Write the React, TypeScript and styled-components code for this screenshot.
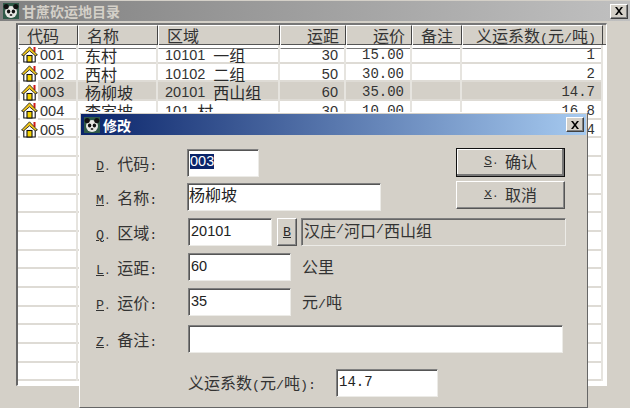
import React from "react";
import styled, { createGlobalStyle } from "styled-components";

const Global = createGlobalStyle`
  html, body { margin: 0; padding: 0; background: #d4d0c8; }
  * { box-sizing: border-box; }
`;
const han = `"Noto Sans CJK SC", sans-serif`;
const mono = `"Liberation Mono", monospace`;
const sans = `"Liberation Sans", sans-serif`;

const Screen = styled.div`
  position: relative; width: 630px; height: 408px; overflow: hidden;
  background: #d4d0c8; font-family: ${han}; color: #2a2a2a;
  padding: 1px 0 0 0; display: flex; flex-direction: column;
`;
const TitleBar = styled.div<{ $active?: boolean }>`
  height: ${p => (p.$active ? 21 : 20)}px; flex: none; display: flex; align-items: center; padding: 0 2px 0 3px;
  background: ${p => p.$active ? "linear-gradient(90deg,#0a246a,#a6caf0)" : "linear-gradient(90deg,#808080,#c0c0c0)"};
`;
const TitleText = styled.span<{ $active?: boolean }>`
  font-size: 14px; font-weight: 700; margin-left: 3px; flex: 1; line-height: 20px; white-space: nowrap;
  color: ${p => (p.$active ? "#fff" : "#d4d0c8")};
`;
const CloseBtn = styled.div`
  width: 18px; height: 15px; background: #d4d0c8; display: flex; align-items: center; justify-content: center;
  border: 1px solid; border-color: #fff #404040 #404040 #fff; box-shadow: inset -1px -1px 0 #808080;
`;
const Table = styled.div`
  margin: 2px 23px 0 16px; height: 363px; overflow: hidden; background: #fff;
  border-left: 2px solid #666; border-top: 2px solid #777; border-right: 1px solid #fff; border-bottom: 1px solid #fff;
  padding-right: 4px;
`;
const cols = "60px 80px 122px 66px 66px 50px 141px";
const HeadRow = styled.div`
  display: grid; grid-template-columns: ${cols}; height: 20px; background: #d4d0c8; margin-right: -4px; border-bottom: 1px solid #555;
`;
const HeadCell = styled.div<{ $right?: boolean }>`
  font-size: 16px; line-height: 19px; padding: 0 ${p => (p.$right ? 6 : 8)}px 0 8px; white-space: nowrap;
  text-align: ${p => (p.$right ? "right" : "left")};
  border: 1px solid; border-color: #fff #444 #777 #fff; color: #333;
`;
const Row = styled.div<{ $selected?: boolean }>`
  display: grid; grid-template-columns: ${cols}; height: 18.7px;
  background: ${p => (p.$selected ? "#d4d0c8" : "#fff")};
  box-shadow: inset 0 -2px 0 #dedbd5;
`;
const Cell = styled.div<{ $right?: boolean; $pad?: number }>`
  height: 18.7px; display: flex; align-items: center; white-space: nowrap;
  justify-content: ${p => (p.$right ? "flex-end" : "flex-start")};
  padding: 1px ${p => (p.$right ? 6 : 0)}px 0 ${p => p.$pad ?? 0}px;
  border-right: 2px solid #e6e4df; font-size: 16px; line-height: 18px;
`;
const IconBox = styled.span`
  width: 18px; height: 18px; margin: 0 2px 0 2px; background: #fff; display: flex; align-items: center; justify-content: center; flex: none;
`;
const Sans = styled.span`font-family: ${sans}; font-size: 14.5px; color: #333;`;
const Mono = styled.span`font-family: ${mono}; font-size: 14px; color: #333;`;
const Half = styled.span`font-family: ${mono}; font-size: 13.33px;`;
const Dot = styled.span`font-family: ${mono}; font-size: 11px; white-space: pre;`;
const Han = styled.span`margin-left: 8px;`;

const Dialog = styled.div`
  position: absolute; left: 79px; top: 112px; width: 509px; height: 296px; background: #d4d0c8; padding: 1px;
  border: 1px solid; border-color: #fff #666 #666 #fff;
`;
const Body = styled.div`padding: 14px 21px 0 15px; display: flex; flex-direction: column;`;
const Top = styled.div`display: flex; justify-content: space-between; align-items: flex-start;`;
const Fields = styled.div`display: flex; flex-direction: column; gap: 6px;`;
const Buttons = styled.div`display: flex; flex-direction: column; gap: 4px; margin-top: -1px;`;
const Btn = styled.div<{ $def?: boolean }>`
  width: 109px; height: ${p => (p.$def ? 29 : 28)}px; display: flex; align-items: center; justify-content: center; font-size: 16px; color: #333; padding-bottom: 3px;
  border: 1px solid; border-color: ${p => (p.$def ? "#111" : "#fff #555 #555 #fff")};
  box-shadow: ${p => (p.$def ? "inset -2px -2px 0 #777, inset 1px 1px 0 #fff" : "inset -1px -1px 0 #888")};
`;
const Key = styled.span`font-family: ${mono}; font-size: 13.33px; text-decoration: underline;`;
const FormRow = styled.div<{ $mt?: number; $ml?: number }>`
  display: flex; align-items: center; height: 28px; margin-top: ${p => p.$mt ?? 0}px; margin-left: ${p => p.$ml ?? 0}px;
`;
const Label = styled.label<{ $w: number; $up?: number }>`
  width: ${p => p.$w}px; flex: none; font-size: 16px; white-space: nowrap; color: #333; margin-top: ${p => -(p.$up ?? 1)}px;
`;
const Input = styled.div<{ $w: number; $mono?: boolean }>`
  width: ${p => p.$w}px; height: 28px; flex: none; background: #fff; display: flex; align-items: center; padding: 0 0 2px 2px; white-space: nowrap; overflow: hidden;
  border: 1px solid; border-color: #808080 #ecebe7 #ecebe7 #808080; box-shadow: inset 1px 1px 0 #555;
  font-family: ${p => (p.$mono ? mono : sans)}; font-size: ${p => (p.$mono ? 14 : 14.5)}px; color: #222;
`;
const HanValue = styled.span`font-family: ${han}; font-size: 16px; line-height: 18px; margin: -5px 0 0 -1px;`;
const Selected = styled.span`background: #0a246a; color: #fff; line-height: 15px; margin-top: -2px;`;
const Browse = styled.div`
  width: 20px; height: 28px; margin: 0 4px 0 5px; flex: none; display: flex; align-items: center; justify-content: center;
  border: 1px solid; border-color: #fff #555 #555 #fff; box-shadow: inset -1px -1px 0 #888;
`;
const ReadOnly = styled.div`
  width: 265px; height: 28px; flex: none; padding: 0 0 5px 2px; display: flex; align-items: center; font-size: 16px; color: #333; white-space: nowrap;
  border: 1px solid; border-color: #808080 #ecebe7 #ecebe7 #808080; box-shadow: inset 1px 1px 0 #666;
`;
const Unit = styled.span`font-size: 16px; margin-left: 11px; color: #333; margin-top: -3px;`;

const Panda = () => (
  <svg width="16" height="16" viewBox="0 0 16 16">
    <rect width="16" height="16" fill="#2f5a48" />
    <circle cx="8" cy="9" r="6" fill="#e8e8e4" />
    <circle cx="3.2" cy="3.6" r="2.6" fill="#111" />
    <circle cx="12.8" cy="3.6" r="2.6" fill="#111" />
    <ellipse cx="5.6" cy="8.4" rx="1.7" ry="2" fill="#111" />
    <ellipse cx="10.4" cy="8.4" rx="1.7" ry="2" fill="#111" />
    <ellipse cx="8" cy="12" rx="1.4" ry="1" fill="#333" />
  </svg>
);
const House = () => (
  <svg width="17" height="17" viewBox="0 0 17 17">
    <rect x="12.5" y="1" width="2" height="5" fill="#d01818" />
    <path d="M2.8 8.5V16H14.2V8.5" fill="#fff" stroke="#111" strokeWidth="1.1" />
    <path d="M8.5 .8L.6 9L2.6 9.8L8.5 4.8L14.4 9.8L16.4 9Z" fill="#f4c81c" stroke="#222" strokeWidth=".9" strokeLinejoin="round" />
    <rect x="6" y="9.5" width="5" height="6.5" fill="#f7d400" stroke="#111" strokeWidth="1.1" />
  </svg>
);
const X = () => (
  <svg width="10" height="8" viewBox="0 0 10 8"><path d="M1 0H3L5 2.8 7 0H9L6 4 9 8H7L5 5.2 3 8H1L4 4Z" fill="#000" /></svg>
);

const data = [
  { code: "001", name: "东村", num: "10101", reg: "一组", dist: "30", price: "15.00", k: "1" },
  { code: "002", name: "西村", num: "10102", reg: "二组", dist: "50", price: "30.00", k: "2" },
  { code: "003", name: "杨柳坡", num: "20101", reg: "西山组", dist: "60", price: "35.00", k: "14.7", sel: true },
  { code: "004", name: "李家坡", num: "101", reg: "村", dist: "30", price: "10.00", k: "16.8" },
  { code: "005", name: "", num: "", reg: "", dist: "", price: "", k: "15.4" },
];
const blanks = Array.from({ length: 13 }, (_, i) => i);

export default function App() {
  return (
    <Screen>
      <Global />
      <TitleBar>
        <Panda />
        <TitleText>甘蔗砍运地目录</TitleText>
        <CloseBtn><X /></CloseBtn>
      </TitleBar>
      <Table>
        <HeadRow>
          <HeadCell>代码</HeadCell>
          <HeadCell>名称</HeadCell>
          <HeadCell>区域</HeadCell>
          <HeadCell $right>运距</HeadCell>
          <HeadCell $right>运价</HeadCell>
          <HeadCell>备注</HeadCell>
          <HeadCell $right>义运系数<Half>(</Half>元<Half>/</Half>吨<Half>)</Half></HeadCell>
        </HeadRow>
        {data.map(r => (
          <Row key={r.code} $selected={r.sel}>
            <Cell><IconBox><House /></IconBox><Sans>{r.code}</Sans></Cell>
            <Cell $pad={7}>{r.name}</Cell>
            <Cell $pad={7}><Sans>{r.num}</Sans>{r.reg && <Han>{r.reg}</Han>}</Cell>
            <Cell $right><Sans>{r.dist}</Sans></Cell>
            <Cell $right><Mono>{r.price}</Mono></Cell>
            <Cell />
            <Cell $right><Mono>{r.k}</Mono></Cell>
          </Row>
        ))}
        {blanks.map(i => (
          <Row key={i}>
            <Cell /><Cell /><Cell /><Cell /><Cell /><Cell /><Cell />
          </Row>
        ))}
      </Table>
      <Dialog>
        <TitleBar $active>
          <Panda />
          <TitleText $active>修改</TitleText>
          <CloseBtn><X /></CloseBtn>
        </TitleBar>
        <Body>
          <Top>
            <Fields>
              <FormRow>
                <Label $w={91}><Key>D</Key><Dot>. </Dot>代码<Half>:</Half></Label>
                <Input $w={72}><Selected>003</Selected></Input>
              </FormRow>
              <FormRow>
                <Label $w={91}><Key>M</Key><Dot>. </Dot>名称<Half>:</Half></Label>
                <Input $w={194}><HanValue>杨柳坡</HanValue></Input>
              </FormRow>
            </Fields>
            <Buttons>
              <Btn $def><Key>S</Key><Dot>. </Dot>确认</Btn>
              <Btn><Key>x</Key><Dot>. </Dot>取消</Btn>
            </Buttons>
          </Top>
          <FormRow $mt={7}>
            <Label $w={92}><Key>Q</Key><Dot>. </Dot>区域<Half>:</Half></Label>
            <Input $w={84}>20101</Input>
            <Browse><Key>B</Key></Browse>
            <ReadOnly>汉庄<Half>/</Half>河口<Half>/</Half>西山组</ReadOnly>
          </FormRow>
          <FormRow $mt={7}>
            <Label $w={92}><Key>L</Key><Dot>. </Dot>运距<Half>:</Half></Label>
            <Input $w={103}>60</Input>
            <Unit>公里</Unit>
          </FormRow>
          <FormRow $mt={7}>
            <Label $w={92}><Key>P</Key><Dot>. </Dot>运价<Half>:</Half></Label>
            <Input $w={103}>35</Input>
            <Unit>元<Half>/</Half>吨</Unit>
          </FormRow>
          <FormRow $mt={9}>
            <Label $w={92}><Key>Z</Key><Dot>. </Dot>备注<Half>:</Half></Label>
            <Input $w={375} />
          </FormRow>
          <FormRow $mt={16} $ml={92}>
            <Label $w={148} $up={3}>义运系数<Half>(</Half>元<Half>/</Half>吨<Half>):</Half></Label>
            <Input $w={102} $mono>14.7</Input>
          </FormRow>
        </Body>
      </Dialog>
    </Screen>
  );
}
